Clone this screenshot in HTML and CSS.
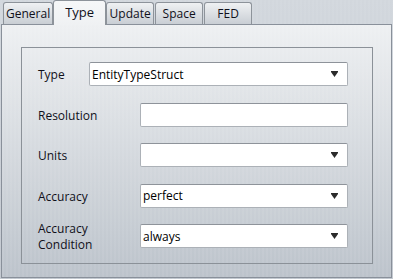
FILE: index.html
```html
<!DOCTYPE html>
<html>
<head>
  <meta charset="UTF-8">
  <title>Properties</title>
  <link rel="stylesheet" href="styles.css">
</head>
<body>
  <div class="tabs">
    <div class="tab">General</div>
    <div class="tab active">Type</div>
    <div class="tab">Update</div>
    <div class="tab">Space</div>
    <div class="tab">FED</div>
  </div>

  <div class="pane">
    <div class="group">
      <div class="row row-wide">
        <span class="label">Type</span>
        <div class="field combo">
          <span>EntityTypeStruct</span>
          <svg class="arrow" width="7" height="6" viewBox="0 0 7 6"><path d="M0 0H7V1L3.5 6L0 1Z"/></svg>
        </div>
      </div>
      <div class="row">
        <span class="label">Resolution</span>
        <div class="field"></div>
      </div>
      <div class="row">
        <span class="label">Units</span>
        <div class="field combo">
          <span></span>
          <svg class="arrow" width="7" height="6" viewBox="0 0 7 6"><path d="M0 0H7V1L3.5 6L0 1Z"/></svg>
        </div>
      </div>
      <div class="row">
        <span class="label">Accuracy</span>
        <div class="field combo">
          <span>perfect</span>
          <svg class="arrow" width="7" height="6" viewBox="0 0 7 6"><path d="M0 0H7V1L3.5 6L0 1Z"/></svg>
        </div>
      </div>
      <div class="row">
        <span class="label">Accuracy<br>Condition</span>
        <div class="field combo">
          <span>always</span>
          <svg class="arrow" width="7" height="6" viewBox="0 0 7 6"><path d="M0 0H7V1L3.5 6L0 1Z"/></svg>
        </div>
      </div>
    </div>
  </div>
</body>
</html>
```

FILE: styles.css
```css
body {
  margin: 0;
  width: 393px;
  height: 279px;
  overflow: hidden;
  font-family: 'Open Sans', 'Noto Sans', sans-serif;
  font-size: 12px;
  color: #10101a;
  background: repeating-linear-gradient(90deg, rgba(255, 255, 255, 0.05) 0 2px, transparent 2px 4px),
    linear-gradient(#d2d7dd, #c1c7cf);
}

.tabs {
  display: flex;
  align-items: flex-end;
  height: 24px;
  padding-left: 3px;
  position: relative;
  z-index: 1;
}

.tab {
  box-sizing: border-box;
  height: 22px;
  min-width: 48px;
  padding: 0 2px;
  margin-right: 1px;
  border: 1px solid #8d939a;
  border-bottom: none;
  border-radius: 3px 3px 0 0;
  background: linear-gradient(#eff1f3, #c9ced4);
  display: flex;
  align-items: center;
  justify-content: center;
}

.tab.active {
  height: 25px;
  margin: 0 0 -1px -1px;
  padding: 0 11px 3px;
  font-size: 13px;
  background: linear-gradient(#f6f7f8, #eff1f3);
}

.pane {
  box-sizing: border-box;
  height: 254px;
  margin: 0 1px;
  padding: 22px 18px 0 19px;
  border: 1px solid #89909a;
  background: repeating-linear-gradient(90deg, rgba(255, 255, 255, 0.06) 0 2px, transparent 2px 4px),
    linear-gradient(#eef0f2, #bcc3cb);
}

.group {
  box-sizing: border-box;
  height: 217px;
  padding: 14px 24px 0 16px;
  border: 1px solid #8b9198;
  display: flex;
  flex-direction: column;
  gap: 16.5px;
}

.row {
  display: flex;
  align-items: center;
  height: 24px;
}

.label {
  width: 102px;
  flex-shrink: 0;
  line-height: 16px;
  padding-top: 2px;
}

.row-wide .label {
  width: 51px;
}

.field {
  box-sizing: border-box;
  flex: 1;
  height: 24px;
  padding: 0 9px 0 2px;
  border: 1px solid #acb1b7;
  border-top-color: #8e939a;
  border-radius: 2px;
  background: #fff;
  display: flex;
  align-items: center;
  justify-content: space-between;
  color: #000;
}

.arrow {
  fill: #2b2b2b;
}
```
